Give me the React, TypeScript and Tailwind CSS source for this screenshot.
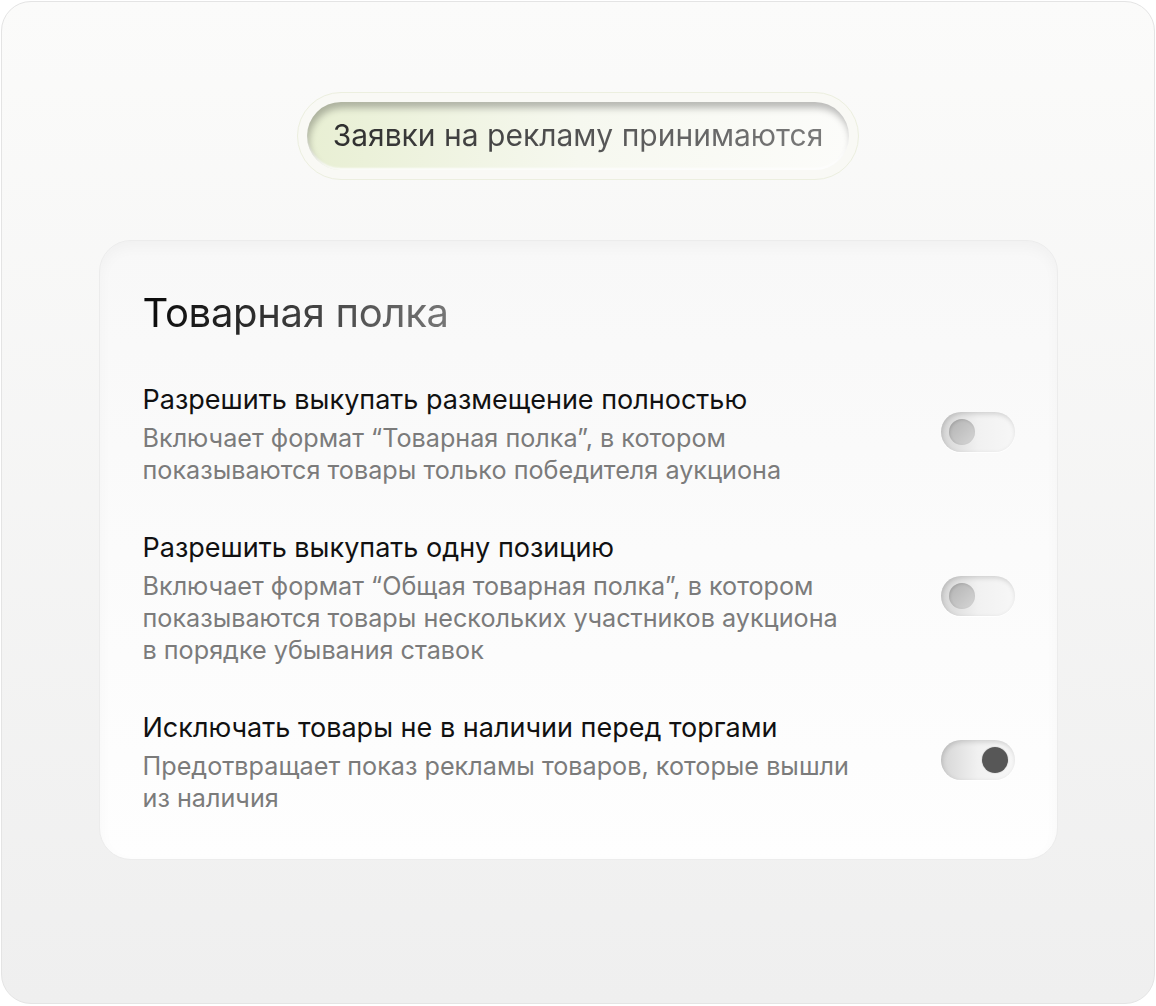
const font = { fontFamily: "Inter, 'Noto Sans', sans-serif" };

function Toggle({ on = false }: { on?: boolean }) {
  return (
    <div className="relative -mt-[4px] h-[40px] w-[74px] flex-none rounded-full bg-gradient-to-r from-[#d6d6d6] via-[#f1f1f1] to-[#f7f7f7] shadow-[inset_1px_2px_5px_rgba(0,0,0,0.15),0_1px_1px_rgba(255,255,255,0.9)]">
      {on ? (
        <div className="absolute right-[7px] top-[7px] h-[26px] w-[26px] rounded-full bg-[#575757] shadow-[0_0_0_1px_rgba(0,0,0,0.05)]" />
      ) : (
        <div className="absolute left-[8px] top-[7px] h-[26px] w-[26px] rounded-full bg-gradient-to-br from-[#b2b2b2] to-[#d6d6d6] shadow-[inset_1px_1px_3px_rgba(0,0,0,0.12)]" />
      )}
    </div>
  );
}

function Setting({
  title,
  lines,
  on,
}: {
  title: string;
  lines: string[];
  on?: boolean;
}) {
  return (
    <div className="flex items-center justify-between">
      <div>
        <div className="text-[27px] leading-[36px] text-[#111111]">{title}</div>
        <div className="mt-[4px] text-[25.2px] leading-[32px] text-[#7b7b7b]">
          {lines.map((l) => (
            <div key={l}>{l}</div>
          ))}
        </div>
      </div>
      <Toggle on={on} />
    </div>
  );
}

export default function App() {
  return (
    <div className="h-[1006px] w-[1156px] bg-white p-[1px]" style={font}>
      <div className="flex h-[1003px] flex-col items-center rounded-[30px] border border-[#e4e4e4] bg-gradient-to-b from-[#fbfbfa] to-[#efefef] pt-[90px]">
        {/* status pill */}
        <div className="rounded-full border border-[#ecefdf] bg-[#f9f9f5] p-[9px]">
          <div className="flex h-[68px] w-[542px] items-center justify-center rounded-full bg-gradient-to-r from-[#e8efd3] via-[#f6f8ef] to-[#fcfcfa] shadow-[inset_2px_6px_7px_rgba(0,0,0,0.26),inset_0_-2px_2px_rgba(255,255,255,0.9)]">
            <span className="bg-gradient-to-r from-[#2e2e2e] to-[#7a7a7a] bg-clip-text pb-[2px] text-[30px] text-transparent">
              Заявки на рекламу принимаются
            </span>
          </div>
        </div>

        {/* settings card */}
        <div className="mt-[60px] w-[959px] rounded-[32px] border border-[#ececec] bg-gradient-to-b from-[#f8f8f8] to-[#fefefe] pb-[45px] pl-[43px] pr-[42px] pt-[49px] shadow-[inset_0_6px_14px_rgba(0,0,0,0.03)]">
          <h2 className="inline-block bg-gradient-to-r from-[#0a0a0a] to-[#777777] bg-clip-text text-[40px] leading-[46px] tracking-[-0.3px] text-transparent">
            Товарная полка
          </h2>
          <div className="mt-[46px] flex flex-col gap-[44px]">
            <Setting
              title="Разрешить выкупать размещение полностью"
              lines={[
                "Включает формат “Товарная полка”, в котором",
                "показываются товары только победителя аукциона",
              ]}
            />
            <Setting
              title="Разрешить выкупать одну позицию"
              lines={[
                "Включает формат “Общая товарная полка”, в котором",
                "показываются товары нескольких участников аукциона",
                "в порядке убывания ставок",
              ]}
            />
            <Setting
              title="Исключать товары не в наличии перед торгами"
              lines={["Предотвращает показ рекламы товаров, которые вышли", "из наличия"]}
              on
            />
          </div>
        </div>
      </div>
    </div>
  );
}
